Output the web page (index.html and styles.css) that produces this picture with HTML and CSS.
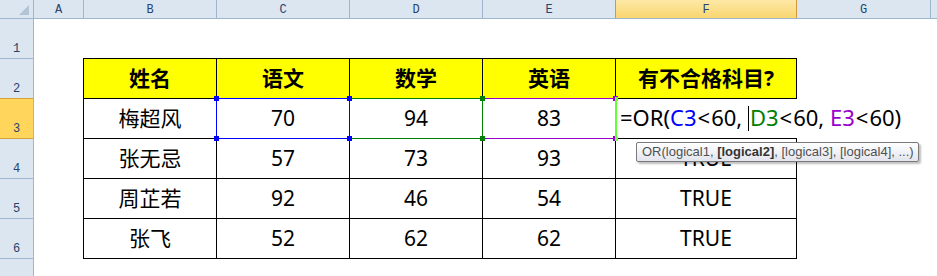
FILE: index.html
```html
<!DOCTYPE html>
<html lang="zh-CN">
<head>
<meta charset="utf-8">
<title>成绩表</title>
<link rel="stylesheet" href="styles.css">
</head>
<body>
<div class="sheet">
  <div class="col-heads">
    <div class="corner"><span class="corner-tri"></span></div>
    <div class="ch w-a">A</div>
    <div class="ch w-n">B</div>
    <div class="ch w-n">C</div>
    <div class="ch w-n">D</div>
    <div class="ch w-n">E</div>
    <div class="ch w-f ch-active">F</div>
    <div class="ch w-g">G</div>
    <div class="ch w-rest"></div>
  </div>
  <div class="body">
    <div class="row-heads">
      <div class="rh">1</div>
      <div class="rh">2</div>
      <div class="rh rh-active">3</div>
      <div class="rh">4</div>
      <div class="rh">5</div>
      <div class="rh">6</div>
      <div class="rh"></div>
    </div>
    <div class="cells">
      <div class="grade-table">
        <div class="cell head">姓名</div>
        <div class="cell head">语文</div>
        <div class="cell head">数学</div>
        <div class="cell head">英语</div>
        <div class="cell head">有不合格科目?</div>

        <div class="cell">梅超风</div>
        <div class="cell">70</div>
        <div class="cell">94</div>
        <div class="cell">83</div>
        <div class="cell"></div>

        <div class="cell">张无忌</div>
        <div class="cell">57</div>
        <div class="cell">73</div>
        <div class="cell">93</div>
        <div class="cell">TRUE</div>

        <div class="cell">周芷若</div>
        <div class="cell">92</div>
        <div class="cell">46</div>
        <div class="cell">54</div>
        <div class="cell">TRUE</div>

        <div class="cell">张飞</div>
        <div class="cell">52</div>
        <div class="cell">62</div>
        <div class="cell">62</div>
        <div class="cell">TRUE</div>

        <!-- reference ranges of the formula being edited -->
        <div class="ref ref-e">
          <i class="h tl"></i><i class="h tr"></i><i class="h bl"></i><i class="h br"></i>
        </div>
        <div class="ref ref-d">
          <i class="h tl"></i><i class="h tr"></i><i class="h bl"></i><i class="h br"></i>
        </div>
        <div class="ref ref-c">
          <i class="h tl"></i><i class="h tr"></i><i class="h bl"></i><i class="h br"></i>
        </div>

        <!-- in-cell editor for F3 -->
        <div class="editor">
          <i class="eh etop"></i><i class="eh ebot"></i>
          <span class="f">=OR(<span class="c-c">C3</span><span class="lt">&lt;</span>60, <span class="caret"></span><span class="c-d">D3</span><span class="lt">&lt;</span>60, <span class="c-e">E3</span><span class="lt">&lt;</span>60)</span>
        </div>

        <div class="tip">OR(logical1, <b>[logical2]</b>, [logical3], [logical4], ...)</div>
      </div>
    </div>
  </div>
</div>
</body>
</html>
```
FILE: styles.css
```css
html, body {
  margin: 0;
  padding: 0;
  background: #fff;
  overflow: hidden;
}

.sheet {
  width: 937px;
  height: 276px;
  overflow: hidden;
  background: #fff;
}

/* column headers */
.col-heads {
  display: flex;
  height: 19px;
  box-sizing: border-box;
  border-bottom: 1px solid #9eb6ce;
  background: #dce6f1;
}
.corner {
  width: 34px;
  flex: none;
  box-sizing: border-box;
  border-right: 1px solid #9eb6ce;
  position: relative;
}
.corner-tri {
  position: absolute;
  right: 4px;
  bottom: 3px;
  width: 0;
  height: 0;
  border-left: 10px solid transparent;
  border-bottom: 10px solid #b4c3d6;
}
.ch {
  flex: none;
  box-sizing: border-box;
  border-right: 1px solid #9eb6ce;
  font-family: "Liberation Mono", "DejaVu Sans Mono", monospace;
  font-size: 12px;
  color: #27426b;
  display: flex;
  align-items: center;
  justify-content: center;
  padding-top: 1px;
}
.w-a { width: 50px; }
.w-n { width: 133px; }
.w-f { width: 181px; }
.w-g { width: 134px; }
.w-rest { flex: 1; border-right: none; }
.ch-active {
  background: linear-gradient(#fde8a6, #f9d670);
  border-left: 1px solid #d39a3c;
  border-right: 1px solid #d39a3c;
  margin-left: -1px;
  width: 182px;
}

/* row headers and cell area */
.body {
  display: flex;
}
.row-heads {
  width: 34px;
  flex: none;
  box-sizing: border-box;
  border-right: 1px solid #9eb6ce;
  background: #dce6f1;
}
.rh {
  height: 40px;
  box-sizing: border-box;
  border-bottom: 1px solid #9eb6ce;
  font-family: "Liberation Mono", "DejaVu Sans Mono", monospace;
  font-size: 12px;
  color: #27426b;
  display: flex;
  align-items: flex-end;
  justify-content: center;
  padding-bottom: 2px;
}
.rh-active {
  background: #ffd55b;
  border-top: 1px solid #d7a039;
  border-bottom: 1px solid #d7a039;
  margin-top: -1px;
  height: 41px;
}

.cells {
  flex: 1;
  padding-left: 49px;
  padding-top: 39px;
}

.grade-table {
  position: relative;
  display: grid;
  grid-template-columns: 133px 133px 133px 133px 181px;
  grid-auto-rows: 40px;
  width: max-content;
  border-left: 1px solid #000;
  border-top: 1px solid #000;
  font-family: "Noto Sans", "Noto Sans CJK SC", sans-serif;
  font-size: 21px;
  color: #000;
}
.cell {
  box-sizing: border-box;
  border-right: 1px solid #000;
  border-bottom: 1px solid #000;
  display: flex;
  align-items: center;
  justify-content: center;
  line-height: 1;
  padding-bottom: 1px;
}
.head {
  background: #ffff00;
  font-weight: 700;
}

/* formula reference boxes */
.ref {
  position: absolute;
  top: 39px;
  width: 134px;
  height: 41px;
  box-sizing: border-box;
  border: 1px solid;
}
.ref-c { left: 132px; border-color: #0000ff; color: #0000ff; }
.ref-d { left: 265px; border-color: #008000; color: #008000; }
.ref-e { left: 398px; border-color: #9900cc; color: #9900cc; }
.h {
  position: absolute;
  width: 5px;
  height: 5px;
  background: currentColor;
}
.tl { left: -3px; top: -3px; }
.tr { right: -3px; top: -3px; }
.bl { left: -3px; bottom: -3px; }
.br { right: -3px; bottom: -3px; }

/* F3 in-cell editor */
.editor {
  position: absolute;
  left: 531px;
  top: 40px;
  width: 292px;
  height: 39px;
  box-sizing: border-box;
  background: #fff;
  border-left: 2px solid #66ff33;
  display: flex;
  align-items: center;
  padding-left: 3px;
  padding-bottom: 1px;
  white-space: nowrap;
  font-size: 22px;
}
.eh {
  position: absolute;
  left: -2px;
  width: 3px;
  height: 4px;
  background: #66ff33;
}
.etop { top: -2px; }
.ebot { bottom: -3px; }
.f { line-height: 1; }
.lt { margin: 0 1px; }
.c-c { color: #0000ff; }
.c-d { color: #008000; }
.c-e { color: #9900cc; }
.caret {
  display: inline-block;
  width: 1px;
  height: 25px;
  background: #000;
  vertical-align: -5px;
  margin-right: 1px;
}

/* function argument tooltip */
.tip {
  position: absolute;
  left: 552px;
  top: 83px;
  width: 283px;
  height: 20px;
  box-sizing: border-box;
  border: 1px solid #7a7a7a;
  border-radius: 2px;
  background: linear-gradient(#ffffff, #e3e5ee);
  box-shadow: 2px 2px 2px rgba(0, 0, 0, 0.25);
  font-family: "Liberation Sans", "Noto Sans", sans-serif;
  font-size: 13px;
  line-height: 18px;
  color: #505050;
  padding-left: 5px;
  white-space: nowrap;
}
.tip b { color: #333; }
```
